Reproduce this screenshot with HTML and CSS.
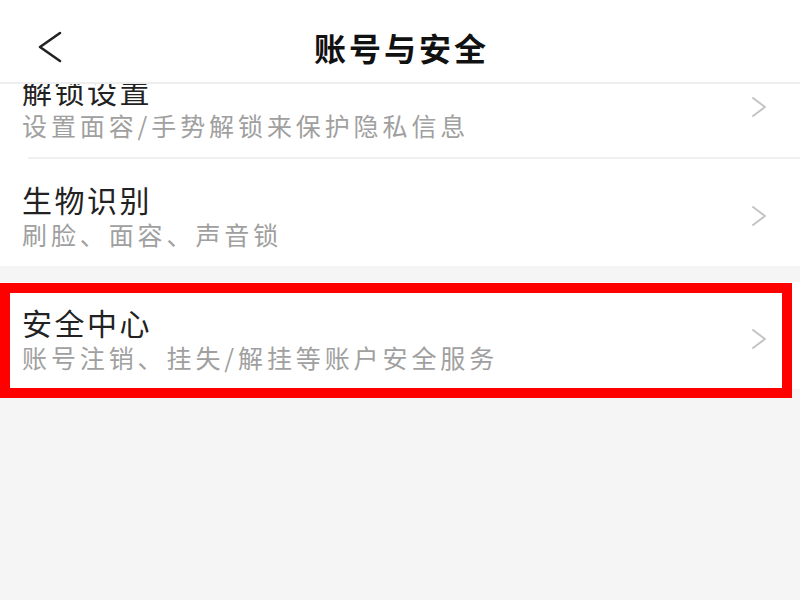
FILE: index.html
```html
<!DOCTYPE html>
<html lang="zh-CN">
<head>
  <meta charset="UTF-8" />
  <meta name="viewport" content="width=device-width, initial-scale=1.0" />
  <title>账号与安全</title>
  <link rel="stylesheet" href="styles.css">
</head>
<body>
  <header class="topbar">
    <div class="back">
      <svg width="26" height="32" viewBox="0 0 26 32">
        <polyline points="23,2 3,16 23,30" fill="none" stroke="#222" stroke-width="2.6" stroke-linecap="round" stroke-linejoin="round" />
      </svg>
    </div>
    <h1 class="title">账号与安全</h1>
    <div></div>
  </header>

  <main class="scroll">
    <div class="content">
      <section class="group">
        <div class="row">
          <div class="text">
            <div class="label">解锁设置</div>
            <div class="desc">设置面容/手势解锁来保护隐私信息</div>
          </div>
          <svg class="chev" width="16" height="22" viewBox="0 0 16 22">
            <polyline points="2,2 14,11 2,20" fill="none" stroke="#c4c4c4" stroke-width="2" stroke-linecap="round" stroke-linejoin="round" />
          </svg>
        </div>
        <div class="divider"></div>
        <div class="row">
          <div class="text">
            <div class="label">生物识别</div>
            <div class="desc">刷脸、面容、声音锁</div>
          </div>
          <svg class="chev" width="16" height="22" viewBox="0 0 16 22">
            <polyline points="2,2 14,11 2,20" fill="none" stroke="#c4c4c4" stroke-width="2" stroke-linecap="round" stroke-linejoin="round" />
          </svg>
        </div>
      </section>

      <section class="group marked">
        <div class="row">
          <div class="text">
            <div class="label">安全中心</div>
            <div class="desc">账号注销、挂失/解挂等账户安全服务</div>
          </div>
          <svg class="chev" width="16" height="22" viewBox="0 0 16 22">
            <polyline points="2,2 14,11 2,20" fill="none" stroke="#c4c4c4" stroke-width="2" stroke-linecap="round" stroke-linejoin="round" />
          </svg>
        </div>
        <div class="highlight"></div>
      </section>
    </div>
  </main>
</body>
</html>
```

FILE: styles.css
```css
body {
  margin: 0;
  width: 800px;
  height: 600px;
  overflow: hidden;
  background: #f5f5f5;
  font-family: "Noto Sans CJK SC", "Noto Sans", sans-serif;
  color: #222;
}

.topbar {
  position: relative;
  z-index: 2;
  height: 84px;
  box-sizing: border-box;
  padding-top: 12px;
  display: grid;
  grid-template-columns: 120px 1fr 120px;
  align-items: center;
  background: #fff;
  border-bottom: 2px solid #eeeeee;
}

.back {
  display: flex;
  align-items: center;
  padding-left: 37px;
}

.back svg {
  display: block;
}

.title {
  margin: 0;
  text-align: center;
  font-size: 32px;
  font-weight: 700;
  letter-spacing: 3px;
  padding-left: 3px;
  color: #111;
}

.scroll {
  height: 514px;
  overflow: hidden;
}

.content {
  margin-top: -34px;
}

.group {
  background: #fff;
  margin-bottom: 16px;
}

.group.marked {
  position: relative;
}

.row {
  height: 107px;
  box-sizing: border-box;
  padding: 21px 33px 0 22px;
  display: flex;
  align-items: flex-start;
}

.text {
  flex: 1;
}

.label {
  font-size: 30px;
  line-height: 38px;
  letter-spacing: 2.5px;
  color: #222;
}

.desc {
  font-size: 25px;
  line-height: 32px;
  letter-spacing: 3.9px;
  color: #a0a0a0;
}

.chev {
  display: block;
  margin-top: 25px;
}

.divider {
  height: 2px;
  margin-left: 28px;
  background: #f0f0f0;
}

.highlight {
  position: absolute;
  left: 0;
  top: 1px;
  width: 792px;
  height: 115px;
  box-sizing: border-box;
  border: 10px solid #ff0000;
}
```
